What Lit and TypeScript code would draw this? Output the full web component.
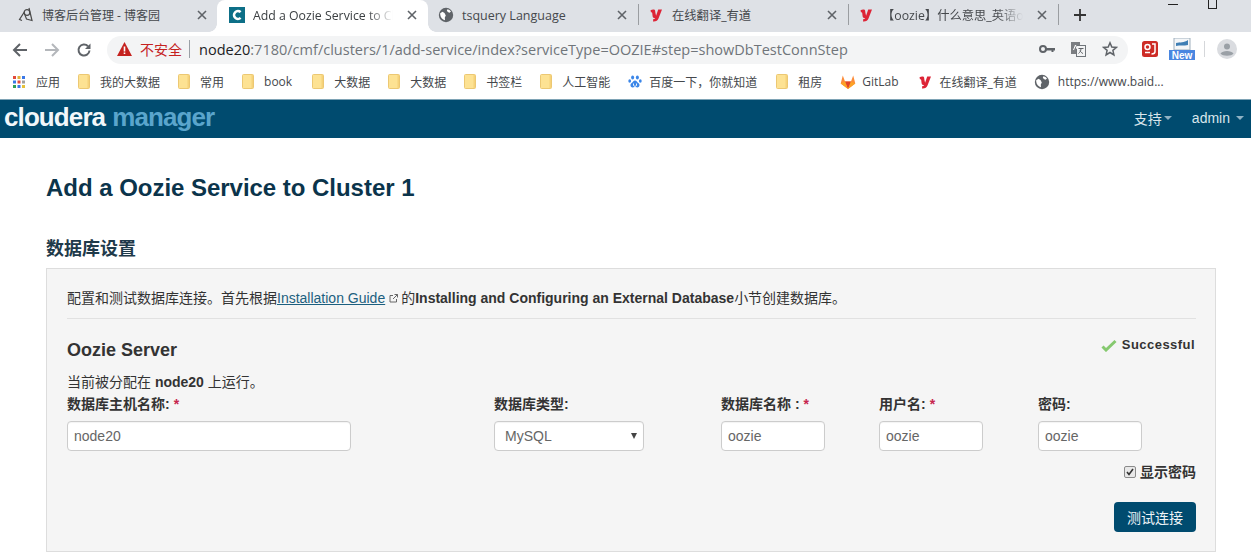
import { LitElement, html, css, svg, TemplateResult } from "lit";
import { customElement } from "lit/decorators.js";

const ico = (w: number, h: number, body: unknown, vb?: string) =>
  html`<svg class="ico" width=${w} height=${h} viewBox=${vb ?? `0 0 ${w} ${h}`}>${body}</svg>`;

const youdao = () =>
  ico(16, 16, svg`<path d="M2.500 3.200c1.500-.8 3.600-1 4.300-.2.500.6.400 1.600.7 3.300L8.100 8.700 10.200 2.500H14L10.500 11.500C9.600 13.800 8 14.700 5 14.500L5.300 12C6.500 12.100 7 11.800 7.200 11.200 5.200 11.200 4.700 10.300 4.500 8.500L4.200 6C4.100 5.300 3.700 5.200 3 5.500z" fill="#dd2436"/>`, "0 0 16 16");
const globe = () =>
  ico(16, 16, svg`<circle cx="8" cy="8" r="7.200" fill="#5f6368"/><path d="M2.200 6.200 4.500 4.800 6.500 6 7.800 8.500 6.800 10.500 7 13.200C4.500 12.800 2.400 10.500 2.200 7.500zM9.500 2.200 11.500 2.900 13 4.500 11.500 5.800 9.800 5 8.800 3.500z" fill="#fff"/>`);
const folder = () =>
  ico(12, 15, svg`<rect x=".5" y=".5" width="11" height="14" rx="1" fill="#fde293" stroke="#ecc873"/><rect x="9.500" y="1" width="1.500" height="13" fill="#f6d27a"/>`);
const blog = () =>
  ico(16, 16, svg`<g fill="none" stroke="#4a4a4a" stroke-width="1.200"><circle cx="9" cy="5.500" r="2.800"/><path d="M11 1 14 13.500 8.500 12 6 5.500 1.500 12.500 4 13.500"/></g>`);
const cloudera = () =>
  ico(16, 16, svg`<rect width="16" height="16" fill="#0d6f87"/><path d="M11.600 5.200A3.900 3.900 0 1 0 11.600 10.800" fill="none" stroke="#fff" stroke-width="2.500"/>`);
const baidu = () =>
  ico(14, 16, svg`<g fill="#3b86e8"><ellipse cx="4.600" cy="3.400" rx="1.500" ry="2"/><ellipse cx="9.400" cy="3.400" rx="1.500" ry="2"/><ellipse cx="1.700" cy="7" rx="1.400" ry="1.800"/><ellipse cx="12.300" cy="7" rx="1.400" ry="1.800"/><path d="M7 6.400c1.600 0 2.200 1.800 3.600 2.800 1.800 1.300.8 4.400-1.400 4.200-1 0-1.400-.4-2.200-.4s-1.200.4-2.200.4C2.600 13.600 1.600 10.500 3.400 9.200 4.800 8.200 5.400 6.400 7 6.400z"/></g><path d="M5.500 9.500v2c0 1 3 1 3 0v-2" fill="none" stroke="#fff" stroke-width=".9"/>`);
const gitlab = () =>
  ico(16, 16, svg`<path d="M8 15 .7 9.500 2.800 1.500 5 7.500h6l2.200-6 2.100 8z" fill="#fc8c3a"/><path d="M8 15 5 7.500h6z" fill="#e24329"/><path d="M8 15 .7 9.500 5 7.500zM8 15l7.300-5.500L11 7.500z" fill="#fca326"/>`);
const apps = () => {
  const colors = ["#e24a3b", "#e0b13a", "#3b78e7", "#3b78e7", "#e24a3b", "#a0a0a0", "#2f9e58", "#3b78e7", "#e6c13a"];
  return ico(12, 12, colors.map((c, i) => svg`<rect x=${(i % 3) * 4.5} y=${Math.floor(i / 3) * 4.5} width="3" height="3" fill=${c}/>`));
};

interface Tab { icon: TemplateResult; title: string; cls?: string; fade?: boolean }
const tabs: Tab[] = [
  { icon: blog(), title: "博客后台管理 - 博客园", cls: "first" },
  { icon: cloudera(), title: "Add a Oozie Service to Cl", cls: "active", fade: true },
  { icon: globe(), title: "tsquery Language", cls: "after-active" },
  { icon: youdao(), title: "在线翻译_有道", cls: "sep" },
  { icon: youdao(), title: "【oozie】什么意思_英语oo", cls: "sep", fade: true },
];

const marks: { icon: TemplateResult; label: string; gap: number; end?: number }[] = [
  { icon: apps(), label: "应用", gap: 11 },
  { icon: folder(), label: "我的大数据", gap: 10 },
  { icon: folder(), label: "常用", gap: 10 },
  { icon: folder(), label: "book", gap: 10, end: 20 },
  { icon: folder(), label: "大数据", gap: 10 },
  { icon: folder(), label: "大数据", gap: 10 },
  { icon: folder(), label: "书签栏", gap: 10 },
  { icon: folder(), label: "人工智能", gap: 10 },
  { icon: baidu(), label: "百度一下，你就知道", gap: 7, end: 19 },
  { icon: folder(), label: "租房", gap: 10 },
  { icon: gitlab(), label: "GitLab", gap: 6 },
  { icon: youdao(), label: "在线翻译_有道", gap: 7, end: 17 },
  { icon: globe(), label: "https://www.baid...", gap: 8 },
];

const fields = [
  { label: "数据库主机名称:", req: true, value: "node20", cls: "w-host" },
  { label: "数据库类型:", req: false, value: "MySQL", cls: "w-type", select: true },
  { label: "数据库名称 :", req: true, value: "oozie", cls: "w-sm" },
  { label: "用户名:", req: true, value: "oozie", cls: "w-sm" },
  { label: "密码:", req: false, value: "oozie", cls: "w-sm" },
];

@customElement("app-root")
export class AppRoot extends LitElement {
  static styles = css`
    :host {
      display: block;
      width: 1251px;
      height: 558px;
      overflow: hidden;
      background: #fff;
      font-family: "Liberation Sans", "Noto Sans CJK SC", sans-serif;
      color: #333;
    }
    * { box-sizing: border-box; }
    .ico { display: block; flex: none; }

    .tabstrip {
      height: 32px;
      background: #dee1e6;
      display: flex;
      align-items: stretch;
      font-family: "Open Sans", "Noto Sans CJK SC", sans-serif;
      font-size: 12.3px;
      color: #45484c;
    }
    .tab {
      width: 210px;
      flex: none;
      display: flex;
      align-items: center;
      padding: 0 11px 2px 10px;
      position: relative;
    }
    .tab.first { width: 217px; padding-left: 18px; padding-right: 10px; font-size: 12px; }
    .tab.after-active { font-size: 12.5px; }
    .tab.active {
      background: #fff;
      border-radius: 8px 8px 0 0;
      width: 211px;
      padding-left: 12px;
      color: #3c4043;
    }
    .tab.active::before,
    .tab.active::after {
      content: "";
      position: absolute;
      bottom: 0;
      width: 8px;
      height: 8px;
    }
    .tab.active::before {
      left: -8px;
      background: radial-gradient(circle at 0 0, transparent 7.500px, #fff 8px);
    }
    .tab.active::after {
      right: -8px;
      background: radial-gradient(circle at 100% 0, transparent 7.500px, #fff 8px);
    }
    .tab.sep::before {
      content: "";
      position: absolute;
      left: 0;
      top: 4px;
      height: 21px;
      width: 1px;
      background: #9a9da1;
    }
    .tab-title {
      flex: 1;
      margin-left: 8px;
      white-space: nowrap;
      overflow: visible;
      min-width: 0;
    }
    .tab-title.fade {
      -webkit-mask-image: linear-gradient(to right, #000 78%, transparent 96%);
      mask-image: linear-gradient(to right, #000 78%, transparent 96%);
    }
    .tab-x { flex: none; margin-left: 8px; }
    .newtab {
      flex: none;
      display: flex;
      align-items: center;
      padding: 0 0 2px 16px;
      position: relative;
    }
    .newtab::before {
      content: "";
      position: absolute;
      left: 0;
      top: 4px;
      height: 21px;
      width: 1px;
      background: #9a9da1;
    }
    .winctl {
      margin-left: auto;
      display: flex;
      align-items: flex-start;
      gap: 30px;
      padding-right: 34px;
    }
    .win-min { width: 10px; height: 1px; background: #222; margin-top: 4px; }
    .win-max { width: 9px; height: 9px; border: 1px solid #222; border-top: 0; }

    .toolbar {
      height: 32px;
      background: #fff;
      display: flex;
      align-items: flex-end;
      padding-left: 12px;
    }
    .nav {
      display: flex;
      align-items: center;
      gap: 16px;
      height: 28px;
      width: 95px;
      flex: none;
      padding-bottom: 1px;
    }
    .omni {
      width: 1021px;
      height: 28px;
      flex: none;
      background: #f3f4f5;
      border-radius: 14px;
      display: flex;
      align-items: center;
      padding: 0 10px 2px 10px;
      font-family: "Open Sans", "Noto Sans CJK SC", sans-serif;
      font-size: 14.53px;
      color: #70757a;
      white-space: nowrap;
    }
    .warn { color: #c5221f; font-size: 14px; margin: 0 7px 0 8px; }
    .omni-sep { width: 1px; height: 18px; background: #9aa0a6; margin-right: 9px; }
    .host { color: #202124; }
    .omni-icons { margin-left: auto; display: flex; align-items: center; gap: 16px; }
    .exts { display: flex; align-items: center; height: 28px; margin-left: 14px; padding-bottom: 2px; }
    .ext-new { margin-left: 11px; }
    .ext-sep { width: 1px; height: 16px; background: #d5d7da; margin: 0 12px 0 9px; }

    .bookmarks {
      height: 36px;
      background: #fff;
      display: flex;
      align-items: center;
      padding-left: 13px;
      font-family: "Open Sans", "Noto Sans CJK SC", sans-serif;
      font-size: 12px;
      color: #45484c;
      border-bottom: 1px solid #7ea3b5;
      white-space: nowrap;
    }
    .mark { display: flex; align-items: center; flex: none; margin-right: 18px; }
    .mark-label { display: block; }

    .navbar {
      height: 38px;
      background: #004b6f;
      display: flex;
      align-items: center;
      padding: 0 7px 0 4px;
      color: #d9e6ec;
      font-size: 14px;
    }
    .logo {
      font-family: "Liberation Sans", sans-serif;
      font-weight: 700;
      font-size: 26px;
      letter-spacing: -.9px;
      line-height: 1;
      white-space: nowrap;
      margin-top: -4px;
    }
    .logo .c { color: #f2f7fa; }
    .logo .m { color: #5aa5cc; margin-left: 7px; }
    .nav-right { margin-left: auto; display: flex; align-items: center; gap: 20px; padding-bottom: 2px; }
    .nav-item { display: flex; align-items: center; gap: 2px; }
    .caret {
      width: 0; height: 0;
      border-left: 4px solid transparent;
      border-right: 4px solid transparent;
      border-top: 4px solid #8fb2c4;
    }
    .nav-item.admin { gap: 6px; }

    .page { padding: 0 35px 0 46px; }
    h1 {
      margin: 0;
      padding-top: 36px;
      font-size: 24px;
      line-height: 28px;
      font-weight: 700;
      color: #0b344b;
      letter-spacing: -.03px;
    }
    h2 {
      margin: 0;
      padding-top: 36px;
      font-size: 18px;
      line-height: 23px;
      font-weight: 700;
      color: #1f3a4a;
    }
    .panel {
      margin-top: 7px;
      height: 284px;
      background: #f5f5f5;
      border: 1px solid #ddd;
      padding: 20px 19px 0 20px;
      font-size: 14px;
      color: #333;
    }
    .intro {
      line-height: 18px;
      padding-bottom: 11px;
      border-bottom: 1px solid #e1e1e1;
      white-space: nowrap;
      display: flex;
      align-items: center;
    }
    .intro a { color: #1c5f7f; text-decoration: underline; }
    .ext-link { margin: 0 3px 0 4px; }
    .server-head {
      display: flex;
      justify-content: space-between;
      align-items: flex-start;
      margin-top: 14px;
    }
    h3 {
      margin: 6px 0 0;
      font-size: 18px;
      line-height: 22px;
      font-weight: 700;
      color: #333;
    }
    .ok {
      display: flex;
      align-items: center;
      gap: 5px;
      font-weight: 700;
      letter-spacing: .45px;
      font-size: 13px;
      line-height: 16px;
      margin: 4px 1px 0 0;
    }
    .assign { margin-top: 12px; line-height: 18px; }
    .form {
      display: grid;
      grid-template-columns: 427px 227px 158px 159px 1fr;
      margin-top: 4px;
    }
    .lbl {
      display: block;
      font-weight: 700;
      line-height: 18px;
      white-space: nowrap;
    }
    .req { color: #c7254e; margin-left: 4px; }
    .box {
      margin-top: 8px;
      height: 30px;
      background: #fff;
      border: 1px solid #ccc;
      border-radius: 4px;
      display: flex;
      align-items: center;
      font-size: 14px;
      color: #666;
      padding-left: 6px;
      box-shadow: inset 0 1px 1px rgba(0,0,0,.05);
    }
    .w-host { width: 284px; }
    .w-type { width: 150px; padding: 0 6px 0 10px; justify-content: space-between; }
    .w-sm { width: 104px; }
    .arrow {
      width: 0; height: 0;
      border-left: 3.500px solid transparent;
      border-right: 3.500px solid transparent;
      border-top: 6px solid #444;
    }
    .show {
      display: flex;
      justify-content: flex-end;
      align-items: center;
      gap: 4px;
      margin-top: 12px;
      font-weight: 700;
      line-height: 18px;
    }
    .check {
      width: 12px; height: 12px;
      background: #e8e8e8;
      border: 1px solid #8a8a8a;
      border-radius: 2px;
      display: flex;
      align-items: center;
      justify-content: center;
    }
    .actions { display: flex; justify-content: flex-end; margin-top: 21px; }
    .btn {
      width: 82px;
      height: 30px;
      border: 0;
      border-radius: 4px;
      background: #004b6f;
      color: #eef4f7;
      font: inherit;
      font-size: 14px;
      padding: 0;
    }
  `;

  private closeX() {
    return html`<svg class="tab-x" width="10" height="10" viewBox="0 0 10 10"><path d="M1 1l8 8M9 1l-8 8" stroke="#5f6368" stroke-width="1.600"/></svg>`;
  }

  render() {
    return html`
      <div class="tabstrip">
        ${tabs.map((t) => html`
          <div class="tab ${t.cls ?? ""}">
            ${t.icon}
            <span class="tab-title ${t.fade ? "fade" : ""}">${t.title}</span>
            ${this.closeX()}
          </div>`)}
        <div class="newtab">
          <svg class="ico" width="12" height="12" viewBox="0 0 12 12"><path d="M6 0v12M0 6h12" stroke="#333" stroke-width="1.800"/></svg>
        </div>
        <div class="winctl"><span class="win-min"></span><span class="win-max"></span></div>
      </div>

      <div class="toolbar">
        <div class="nav">
          <svg class="ico" width="16" height="16" viewBox="0 0 16 16"><path d="M15 8H2M8 2 2 8l6 6" fill="none" stroke="#5f6368" stroke-width="2"/></svg>
          <svg class="ico" width="16" height="16" viewBox="0 0 16 16"><path d="M1 8h13M8 2l6 6-6 6" fill="none" stroke="#b4b7bb" stroke-width="2"/></svg>
          <svg class="ico" width="16" height="16" viewBox="0 0 16 16"><path d="M13.500 8.500A5.500 5.500 0 1 1 12 4.200" fill="none" stroke="#5f6368" stroke-width="2"/><path d="M14.500 1.500v5.500H9z" fill="#5f6368"/></svg>
        </div>
        <div class="omni">
          <svg class="ico" width="15" height="14" viewBox="0 0 15 14"><path d="M7.500 0 15 14H0z" fill="#c5221f"/><path d="M6.700 4.500h1.600v5H6.700zM6.700 10.500h1.600v1.600H6.700z" fill="#fff"/></svg>
          <span class="warn">不安全</span>
          <span class="omni-sep"></span>
          <span><span class="host">node20</span>:7180/cmf/clusters/1/add-service/index?serviceType=OOZIE#step=showDbTestConnStep</span>
          <div class="omni-icons">
            <svg class="ico" width="16" height="10" viewBox="0 0 16 10"><circle cx="4" cy="5" r="3" fill="none" stroke="#5f6368" stroke-width="2"/><path d="M7 4h9v2.500h-1.500V8H12.500V6.500H7z" fill="#5f6368"/></svg>
            <svg class="ico" width="15" height="15" viewBox="0 0 15 15"><rect x="0" y="0" width="9" height="12" fill="#7b7e82"/><rect x="5.500" y="3.500" width="9" height="11" fill="#f3f4f5" stroke="#70757a"/><path d="M7.500 6.500h5M10 6.500c0 2.500-1.300 4-2.500 5M9 8.500c.7 1.500 1.700 2.500 3 3" stroke="#5f6368" fill="none"/><path d="M2.500 8 4.500 3 6 7" stroke="#fff" fill="none"/></svg>
            <svg class="ico" width="16" height="16" viewBox="0 0 16 16"><path d="M8 1.800 9.800 6l4.600.4-3.500 3 1 4.500L8 11.500 4.100 13.900l1-4.500-3.500-3L6.200 6z" fill="none" stroke="#5f6368" stroke-width="1.500"/></svg>
          </div>
        </div>
        <div class="exts">
          <svg class="ico" width="16" height="16" viewBox="0 0 16 16"><rect width="16" height="16" rx="2.500" fill="#cd2c26"/><circle cx="5.500" cy="6" r="2.500" fill="none" stroke="#fff" stroke-width="1.500"/><path d="M10 3h3v7.500c0 2-2 2.500-3.500 2.500M3 11.500h5" fill="none" stroke="#fff" stroke-width="1.500"/></svg>
          <svg class="ico ext-new" width="26" height="22" viewBox="0 0 26 22"><rect x="5" y="0" width="16" height="12" fill="#f4f6f8" stroke="#9fb0bd"/><path d="M7 5c4-1 8 0 12-3v5c-4 1-8 0-12 1z" fill="#3f7fb5"/><rect x="0" y="12" width="26" height="10" fill="#4a86e0"/><text x="13" y="20.500" text-anchor="middle" font-family="Liberation Sans" font-size="10" font-weight="700" fill="#fff">New</text></svg>
          <span class="ext-sep"></span>
          <svg class="ico" width="20" height="20" viewBox="0 0 20 20"><circle cx="10" cy="10" r="10" fill="#dadce0"/><circle cx="10" cy="7.500" r="3" fill="#9aa0a6"/><path d="M3.500 14.500c2-3.500 11-3.500 13 0-2 3-11 3-13 0z" fill="#9aa0a6"/></svg>
        </div>
      </div>

      <div class="bookmarks">
        ${marks.map((m) => html`
          <div class="mark" style=${m.end ? `margin-right:${m.end}px` : ""}>${m.icon}<span class="mark-label" style="margin-left:${m.gap}px">${m.label}</span></div>`)}
      </div>

      <div class="navbar">
        <div class="logo"><span class="c">cloudera</span><span class="m">manager</span></div>
        <div class="nav-right">
          <div class="nav-item"><span>支持</span><span class="caret"></span></div>
          <div class="nav-item admin"><span>admin</span><span class="caret"></span></div>
        </div>
      </div>

      <div class="page">
        <h1>Add a Oozie Service to Cluster 1</h1>
        <h2>数据库设置</h2>
        <section class="panel">
          <div class="intro">
            配置和测试数据库连接。首先根据<a>Installation Guide</a>
            <svg class="ico ext-link" width="9" height="9" viewBox="0 0 9 9"><path d="M4 1.500H1v6.500h6.500V5M4 5l4.500-4.500M5.500.5h3v3" fill="none" stroke="#666"/></svg>
            的<b>Installing and Configuring an External Database</b>小节创建数据库。
          </div>
          <div class="server-head">
            <h3>Oozie Server</h3>
            <div class="ok">
              <svg class="ico" width="16" height="13" viewBox="0 0 16 13"><path d="M1.500 7.500l3.500 3.500L14.500 2" fill="none" stroke="#86c96f" stroke-width="3"/></svg>
              Successful
            </div>
          </div>
          <div class="assign">当前被分配在 <b>node20</b> 上运行。</div>
          <div class="form">
            ${fields.map((f) => html`
              <div>
                <label class="lbl">${f.label}${f.req ? html`<span class="req">*</span>` : ""}</label>
                <div class="box ${f.cls}">${f.value}${f.select ? html`<span class="arrow"></span>` : ""}</div>
              </div>`)}
          </div>
          <div class="show">
            <span class="check"><svg width="8" height="8" viewBox="0 0 8 8"><path d="M1 4l2 2.500L7 1" fill="none" stroke="#333" stroke-width="1.600"/></svg></span>
            显示密码
          </div>
          <div class="actions"><button class="btn">测试连接</button></div>
        </section>
      </div>
    `;
  }
}
